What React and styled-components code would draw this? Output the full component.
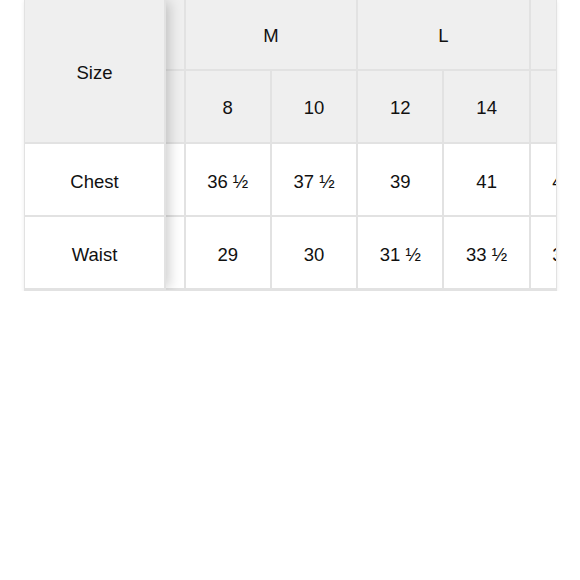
import React, { useEffect, useRef } from 'react';
import styled, { createGlobalStyle } from 'styled-components';

const GlobalStyle = createGlobalStyle`
    html, body {
        margin: 0;
        padding: 0;
        background: #fff;
        font-family: "Liberation Sans", Arial, sans-serif;
        color: #111;
    }
`;

const Page = styled.div`
    padding: 0 23px 0 24px;
`;

const Table = styled.div`
    display: flex;
    border: 1px solid #e2e2e2;
    border-top: none;
    box-shadow: 0 1px 4px rgba(0, 0, 0, 0.08);
    background: #fff;
    overflow: hidden;
`;

const FixedColumn = styled.div`
    position: relative;
    z-index: 1;
    flex: 0 0 141px;
    display: grid;
    grid-template-rows: 144px 73px 73px;
    box-shadow: 5px 0 12px -2px rgba(0, 0, 0, 0.2);
`;

const ScrollArea = styled.div`
    flex: 1;
    overflow-x: auto;
    scrollbar-width: none;
    &::-webkit-scrollbar {
        display: none;
    }
`;

const Grid = styled.div`
    display: grid;
    grid-template-columns: repeat(${(p) => p.$cols}, 86.3px);
    grid-template-rows: 71px 73px 73px 73px;
    width: max-content;
`;

const Cell = styled.div`
    display: flex;
    align-items: center;
    justify-content: center;
    box-sizing: border-box;
    padding-top: ${(p) => (p.$head ? '3px' : '4px')};
    border-right: 2px solid #e2e2e2;
    border-bottom: 2px solid #e2e2e2;
    background: ${(p) => (p.$head ? '#efefef' : '#fff')};
    font-size: 18.5px;
    white-space: nowrap;
    grid-column: ${(p) => (p.$span ? `span ${p.$span}` : 'auto')};
`;

const groups = [
    { name: 'S', sizes: ['4', '6'] },
    { name: 'M', sizes: ['8', '10'] },
    { name: 'L', sizes: ['12', '14'] },
    { name: 'XL', sizes: ['16', '18'] },
    { name: 'XXL', sizes: ['20', '22'] },
];

const rows = [
    { name: 'Chest', values: ['34 ½', '35 ½', '36 ½', '37 ½', '39', '41', '43 ½', '45 ½', '48', '50'] },
    { name: 'Waist', values: ['27', '28', '29', '30', '31 ½', '33 ½', '35 ½', '37 ½', '40', '42'] },
];

export default function App() {
    const scrollRef = useRef(null);

    useEffect(() => {
        if (scrollRef.current) scrollRef.current.scrollLeft = 153;
    }, []);

    const sizes = groups.flatMap((g) => g.sizes);

    return (
        <Page>
            <GlobalStyle />
            <Table>
                <FixedColumn>
                    <Cell $head>Size</Cell>
                    {rows.map((row) => (
                        <Cell key={row.name}>{row.name}</Cell>
                    ))}
                </FixedColumn>
                <ScrollArea ref={scrollRef}>
                    <Grid $cols={sizes.length}>
                        {groups.map((g) => (
                            <Cell key={g.name} $head $span={2}>
                                {g.name}
                            </Cell>
                        ))}
                        {sizes.map((s) => (
                            <Cell key={s} $head $row2>
                                {s}
                            </Cell>
                        ))}
                        {rows.map((row) =>
                            row.values.map((v, i) => <Cell key={row.name + i}>{v}</Cell>)
                        )}
                    </Grid>
                </ScrollArea>
            </Table>
        </Page>
    );
}
